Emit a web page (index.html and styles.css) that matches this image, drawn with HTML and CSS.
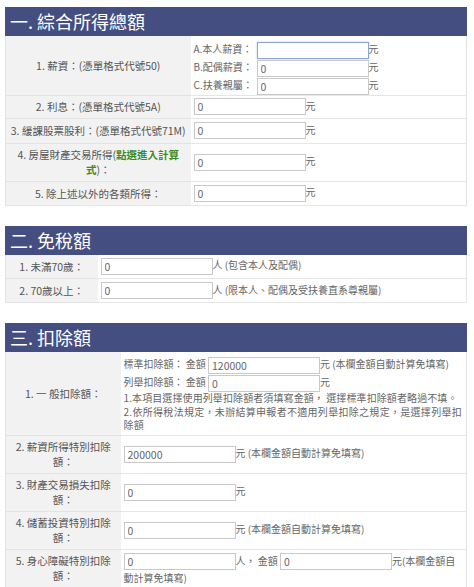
FILE: index.html
```html
<!DOCTYPE html>
<html lang="zh-Hant">
<head>
    <meta charset="UTF-8">
    <meta name="viewport" content="width=device-width, initial-scale=1.0">
    <title>綜合所得稅試算</title>
    <link rel="stylesheet" href="styles.css">
</head>
<body>

    <div class="section">
        <h2>一. 綜合所得總額</h2>
        <table class="form s1">
            <colgroup><col class="c1"><col></colgroup>
            <tr class="h59">
                <th>1. 薪資：(憑單格式代號50)</th>
                <td class="top">
                    <div class="sub"><span class="lbl">A.本人薪資：</span><input type="text" class="focus" value="">元</div>
                    <div class="sub"><span class="lbl">B.配偶薪資：</span><input type="text" value="0">元</div>
                    <div class="sub"><span class="lbl">C.扶養親屬：</span><input type="text" value="0">元</div>
                </td>
            </tr>
            <tr class="h23">
                <th>2. 利息：(憑單格式代號5A)</th>
                <td><input type="text" value="0">元</td>
            </tr>
            <tr class="h25">
                <th class="tight">3. 緩課股票股利：(憑單格式代號71M)</th>
                <td><input type="text" value="0">元</td>
            </tr>
            <tr class="h38">
                <th>4. 房屋財產交易所得(<a class="calc" href="#">點選進入計算<br>式</a>)：</th>
                <td><input type="text" value="0">元</td>
            </tr>
            <tr class="h24">
                <th>5. 除上述以外的各類所得：</th>
                <td><input type="text" value="0">元</td>
            </tr>
        </table>
    </div>

    <div class="section">
        <h2>二. 免稅額</h2>
        <table class="form s2">
            <colgroup><col class="c2"><col></colgroup>
            <tr class="h24">
                <th>1. 未滿70歲：</th>
                <td><input type="text" value="0">人 (包含本人及配偶)</td>
            </tr>
            <tr class="h24">
                <th>2. 70歲以上：</th>
                <td><input type="text" value="0">人 (限本人、配偶及受扶養直系尊親屬)</td>
            </tr>
        </table>
    </div>

    <div class="section">
        <h2>三. 扣除額</h2>
        <table class="form s3">
            <colgroup><col class="c3"><col></colgroup>
            <tr class="h83">
                <th>1. 一 般扣除額：</th>
                <td class="top">
                    <div class="sub">標準扣除額： 金額 <input type="text" value="120000">元 (本欄金額自動計算免填寫)</div>
                    <div class="sub">列舉扣除額： 金額 <input type="text" value="0">元</div>
                    <p class="note"><span class="nowrap">1.本項目選擇使用列舉扣除額者須填寫金額， 選擇標準扣除額者略過不填。</span><br>2.依所得稅法規定，未辦結算申報者不適用列舉扣除之規定，是選擇列舉扣除額</p>
                </td>
            </tr>
            <tr class="h38">
                <th>2. 薪資所得特別扣除<br>額：</th>
                <td><input type="text" value="200000">元 (本欄金額自動計算免填寫)</td>
            </tr>
            <tr class="h38">
                <th>3. 財產交易損失扣除<br>額：</th>
                <td><input type="text" value="0">元</td>
            </tr>
            <tr class="h38">
                <th>4. 儲蓄投資特別扣除<br>額：</th>
                <td><input type="text" value="0">元 (本欄金額自動計算免填寫)</td>
            </tr>
            <tr class="h38">
                <th>5. 身心障礙特別扣除<br>額：</th>
                <td class="top"><input type="text" value="0">人， 金額 <input type="text" value="0">元(本欄金額自動計算免填寫)</td>
            </tr>
        </table>
    </div>

</body>
</html>
```

FILE: styles.css
```css
body {
    margin: 0;
    padding: 7px 0 0 5px;
    font-family: "Noto Sans CJK TC", sans-serif;
    color: #555;
    background-color: #fff;
}
.section {
    width: 462px;
    margin-bottom: 20px;
}
.section h2 {
    margin: 0;
    height: 29px;
    line-height: 29px;
    padding-left: 5px;
    background-color: #454e80;
    color: #fff;
    font-size: 18px;
    font-weight: normal;
}
.form {
    width: 100%;
    border-collapse: collapse;
    table-layout: fixed;
    border: 1px solid #e3e3e3;
    border-top: 0;
}
.c1 { width: 185px; }
.c2 { width: 92px; }
.c3 { width: 115px; }
.form th {
    background-color: #f2f2f2;
    font-weight: normal;
    font-size: 10.5px;
    line-height: 15px;
    color: #555;
    text-align: center;
    padding: 0 4px;
    border-bottom: 1px solid #e3e3e3;
}
.form th.tight {
    padding: 0 2px;
    white-space: nowrap;
}
.form td {
    font-size: 10px;
    line-height: 15px;
    color: #666;
    padding: 0 3px;
    border-bottom: 1px solid #e6e6e6;
    vertical-align: middle;
}
.form td.top {
    vertical-align: top;
    padding-top: 3px;
}
.s1 td.top {
    padding-top: 4px;
}
.h59 { height: 59px; }
.h23 { height: 23px; }
.h24 { height: 24px; }
.h25 { height: 25px; }
.h38 { height: 38px; }
.h83 { height: 83px; }
.sub {
    height: 17px;
    line-height: 17px;
    margin-bottom: 1px;
    white-space: nowrap;
}
.lbl {
    display: inline-block;
    width: 63px;
}
.note {
    margin: 1px 0 0;
    line-height: 13.5px;
    letter-spacing: 0.3px;
}
.nowrap {
    white-space: nowrap;
    letter-spacing: 0.1px;
}
input {
    width: 112px;
    height: 17px;
    box-sizing: border-box;
    margin: 0;
    padding: 0 3px;
    border: 1px solid #c9c9c9;
    font-family: "Noto Sans CJK TC", sans-serif;
    font-size: 10.5px;
    color: #666;
    vertical-align: middle;
    background-color: #fff;
}
input.focus {
    border-color: #8ea6d8;
    box-shadow: 0 0 2px #b7c6e8;
}
a.calc {
    color: #3d8b26;
    font-weight: bold;
    text-decoration: none;
}
```
